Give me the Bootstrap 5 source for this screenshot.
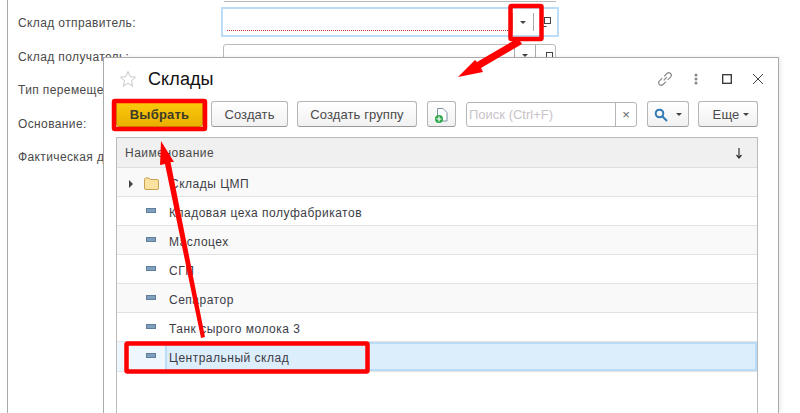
<!DOCTYPE html>
<html lang="ru">
<head>
    <meta charset="UTF-8">
    <meta name="viewport" content="width=device-width, initial-scale=1.0">
    <title>Склады</title>
    <link href="https://cdn.jsdelivr.net/npm/bootstrap@5.3.0/dist/css/bootstrap.min.css" rel="stylesheet">
    <style>
        html, body { height: 100%; }
        body {
            position: relative;
            overflow: hidden;
            background: #fff;
            color: #4a4a4a;
            font-family: "Liberation Sans", Arial, sans-serif;
            font-size: 12px;
            line-height: 16px;
            letter-spacing: .38px;
        }
        /* форма за окном */
        .form-back {
            height: 413px;
            margin-left: 7px;
            padding-left: 10px;
            border-left: 1px solid #aaa;
        }
        .form-line { height: 34px; padding-top: 4px; }
        .form-line-last { margin-top: -1px; }
        .form-line-first { height: 37px; }
        .form-line-second { height: 34px; }
        .form-label-1c { width: 203px; flex: none; }
        .label-first { padding-top: 8px; }
        .label-second { padding-top: 5px; }
        .field-1c {
            width: 333px;
            height: 30px;
            margin-left: 2px;
            border: 1px solid #bbb;
            border-radius: 3px;
            background: #fff;
        }
        .field-top {
            width: 332px;
            height: 2px;
            margin: 0 0 5px 206px;
            border-bottom: 1px solid #bbb;
        }
        .field-active {
            width: 338px;
            margin-left: 0;
            border: 2px solid #bbddf7;
            border-radius: 0;
            padding: 0 4px;
        }
        .field-fill {
            flex: 1;
            margin-bottom: 4px;
            border-bottom: 1px dotted #c03030;
        }
        .field-btn {
            width: 21px;
            border-left: 1px solid #aaa;
        }
        .field-open { width: 20px; padding-left: 6px; }
        .field-btn-low { padding-top: 9px; }
        .field-open-low { padding-top: 7px; }
        .tri-down {
            width: 0;
            height: 0;
            border: 3px solid transparent;
            border-top: 3px solid #444;
            border-bottom: 0;
        }
        /* окно выбора */
        .win-1c {
            position: absolute;
            left: 103px;
            top: 57px;
            width: 676px;
            height: 356px;
            padding: 0 20px 0 12px;
            background: #fff;
            border: 1px solid #aaa;
            border-bottom: 0;
            box-shadow: 2px 0 4px rgba(0, 0, 0, .08);
        }
        .win-head { height: 43px; padding-left: 3px; padding-bottom: 2px; }
        .win-title {
            margin-left: 11px;
            color: #111;
            font-size: 18px;
            letter-spacing: .1px;
        }
        .win-tools { margin-right: -15px; }
        .tool-cell { width: 31px; }
        .tools-1c { gap: 8px; height: 26px; margin-bottom: 10px; }
        .btn-1c {
            height: 26px;
            padding: 1px 0 0;
            border: 1px solid #b5b5b5;
            border-radius: 3px;
            border-bottom-color: #999;
            background: linear-gradient(#fff, #f1f1f1);
            color: #4a4a4a;
            font-size: 13px;
            letter-spacing: .1px;
            flex: none;
        }
        .btn-choose {
            width: 87px;
            border: 1px solid #c99a00;
            background: linear-gradient(#fccb0c, #e9b000);
            color: #3e3a28;
            font-weight: 700;
            letter-spacing: .2px;
        }
        .btn-w1 { width: 77px; }
        .btn-w2 { width: 120px; margin-left: 1px; }
        .btn-w3 { width: 29px; margin-left: 2px; }
        .btn-w4 { width: 42px; margin-left: 2px; }
        .btn-w5 { width: 60px; margin-left: 1px; padding-left: 6px; }
        .search-1c {
            width: 171px;
            height: 25px;
            margin-top: 1px;
            margin-left: 2px;
            border: 1px solid #b5b5b5;
            border-radius: 3px;
            color: #c9c3c9;
            font-size: 13px;
            letter-spacing: 0;
        }
        .search-1c span:first-child { flex: 1; padding-left: 2px; }
        .search-x {
            width: 21px;
            color: #666;
            text-align: center;
            border-left: 1px solid #b5b5b5;
            line-height: 23px;
        }
        .list-1c {
            height: 276px;
            border: 1px solid #bbb;
            border-bottom: 0;
            color: #3c3c46;
            letter-spacing: .5px;
        }
        .list-head {
            height: 30px;
            padding: 0 14px 0 8px;
            background: #f0f0f0;
            border-bottom: 1px solid #ddd;
            color: #4a4a4a;
        }
        .row-1c {
            height: 29px;
            padding-top: 3px;
            border-bottom: 1px solid #e2e2e2;
        }
        .row-alt { background: #f9f9f9; }
        .row-pick {
            height: 29px;
            border-top: 1px solid #e2e2e2;
            border-bottom: 1px solid #e2e2e2;
            margin-top: -1px;
            background: #eff7fe;
            box-sizing: content-box;
        }
        .cell-icon { width: 52px; flex: none; padding-left: 29px; }
        .cell-icon-pick { width: 48px; }
        .cell-folder { width: 53px; flex: none; padding-left: 12px; gap: 11px; }
        .cell-pick {
            flex: 1;
            height: 100%;
            padding: 2px 0 0 2px;
            background: #dcedfc;
            border: 2px solid #bbdcf7;
        }
        .dash-1c {
            width: 10px;
            height: 5px;
            margin-bottom: 5px;
            background: #7f9fbc;
            border: 1px solid #5f7f9c;
        }
        .dash-pick { margin-bottom: 2px; }
        .tri-right {
            width: 0;
            height: 0;
            border: 4px solid transparent;
            border-left: 4px solid #444;
            border-right: 0;
        }
        .marks-1c {
            position: absolute;
            left: 0;
            top: 0;
            pointer-events: none;
        }
    </style>
</head>
<body>
    <div class="form-back">
        <div class="field-top"></div>
        <div class="form-line-first d-flex">
            <div class="form-label-1c label-first">Склад отправитель:</div>
            <div class="field-1c field-active d-flex">
                <div class="field-fill"></div>
                <div class="field-btn d-flex align-items-center justify-content-center my-1"><span class="tri-down"></span></div>
                <div class="field-open field-btn d-flex align-items-center justify-content-center my-1">
                    <svg width="9" height="10" viewBox="0 0 9 10" fill="none" stroke="#444"><rect x="2.500" y=".5" width="6" height="6"/><path d="M4.500 9.500H.5V6"/></svg>
                </div>
            </div>
        </div>
        <div class="d-flex form-line-second">
            <div class="form-label-1c label-second">Склад получатель:</div>
            <div class="field-1c d-flex justify-content-end">
                <div class="field-btn field-btn-low d-flex justify-content-center"><span class="tri-down"></span></div>
                <div class="field-open field-btn field-open-low d-flex justify-content-center">
                    <svg width="9" height="10" viewBox="0 0 9 10" fill="none" stroke="#444"><rect x="2.500" y=".5" width="6" height="6"/><path d="M4.500 9.500H.5V6"/></svg>
                </div>
            </div>
        </div>
        <div class="form-line">Тип перемещения:</div>
        <div class="form-line">Основание:</div>
        <div class="form-line form-line-last">Фактическая дата:</div>
    </div>

    <div class="win-1c d-flex flex-column">
        <div class="win-head d-flex align-items-center">
            <svg width="18" height="18" viewBox="0 0 18 18" fill="#fff" stroke="#c8c8c8"><path d="M9 1.500 11.200 6.700 16.500 7.200 12.500 10.800 13.700 16.200 9 13.300 4.300 16.200 5.500 10.800 1.500 7.200 6.800 6.700Z"/></svg>
            <span class="win-title">Склады</span>
            <div class="win-tools d-flex align-items-center ms-auto">
                <div class="tool-cell d-flex justify-content-center">
                    <svg width="16" height="16" viewBox="0 0 18 18" fill="none" stroke="#888" stroke-width="1.300"><path d="M7.500 10.500 11 7M6 8 2.800 11.200a2.500 2.500 0 0 0 4 4L10 12M8 6l3.200-3.200a2.500 2.500 0 0 1 4 4L12 10"/></svg>
                </div>
                <div class="tool-cell d-flex justify-content-center">
                    <svg width="4" height="12" viewBox="0 0 4 12" fill="#888"><circle cx="2" cy="2" r="1.500"/><circle cx="2" cy="6" r="1.500"/><circle cx="2" cy="10" r="1.500"/></svg>
                </div>
                <div class="tool-cell d-flex justify-content-center">
                    <svg width="10" height="10" viewBox="0 0 10 10" fill="none" stroke="#333" stroke-width="1.300"><rect x=".7" y=".7" width="8.600" height="8.600"/></svg>
                </div>
                <div class="tool-cell d-flex justify-content-center">
                    <svg width="12" height="12" viewBox="0 0 12 12" fill="none" stroke="#444"><path d="M1 1 11 11M11 1 1 11"/></svg>
                </div>
            </div>
        </div>

        <div class="tools-1c d-flex">
            <button class="btn-1c btn-choose">Выбрать</button>
            <button class="btn-1c btn-w1">Создать</button>
            <button class="btn-1c btn-w2">Создать группу</button>
            <button class="btn-1c btn-w3">
                <svg width="18" height="18" viewBox="0 0 18 18"><path d="M4.500 2.500H10L14 6.500V15H4.500Z" fill="#fff" stroke="#7d93a5"/><circle cx="6" cy="13" r="4" fill="#2fa84a"/><path d="M6 10.500v5M3.500 13h5" stroke="#fff" stroke-width="1.200"/></svg>
            </button>
            <div class="search-1c d-flex align-items-center">
                <span>Поиск (Ctrl+F)</span>
                <span class="search-x">×</span>
            </div>
            <button class="btn-1c btn-w4 d-flex align-items-center justify-content-center gap-2">
                <svg width="14" height="14" viewBox="0 0 14 14" fill="none" stroke="#2f79b5" stroke-width="2"><circle cx="5.500" cy="5.500" r="3.800"/><path d="M8.500 8.500 13 13"/></svg>
                <span class="tri-down"></span>
            </button>
            <button class="btn-1c btn-w5 d-flex align-items-center justify-content-center gap-1">Еще <span class="tri-down"></span></button>
        </div>

        <div class="list-1c">
            <div class="list-head d-flex align-items-center justify-content-between">
                <span>Наименование</span>
                <svg width="8" height="12" viewBox="0 0 8 12" fill="none" stroke="#333" stroke-width="1.200"><path d="M4 1V11M1.500 8 4 11 6.500 8"/></svg>
            </div>
            <div class="row-1c row-alt d-flex align-items-center">
                <div class="cell-folder d-flex align-items-center">
                    <span class="tri-right"></span>
                    <svg width="15" height="13" viewBox="0 0 15 13" fill="#fbe2a0" stroke="#c9a24e"><path d="M.5 2.500Q.5 1 2 1H5L6.500 2.500H13Q14.500 2.500 14.500 4V11Q14.500 12.500 13 12.500H2Q.5 12.500 .5 11Z"/></svg>
                </div>
                <span>Склады ЦМП</span>
            </div>
            <div class="row-1c d-flex align-items-center">
                <div class="cell-icon"><div class="dash-1c"></div></div>
                <span>Кладовая цеха полуфабрикатов</span>
            </div>
            <div class="row-1c row-alt d-flex align-items-center">
                <div class="cell-icon"><div class="dash-1c"></div></div>
                <span>Маслоцех</span>
            </div>
            <div class="row-1c d-flex align-items-center">
                <div class="cell-icon"><div class="dash-1c"></div></div>
                <span>СГП</span>
            </div>
            <div class="row-1c row-alt d-flex align-items-center">
                <div class="cell-icon"><div class="dash-1c"></div></div>
                <span>Сепаратор</span>
            </div>
            <div class="row-1c d-flex align-items-center">
                <div class="cell-icon"><div class="dash-1c"></div></div>
                <span>Танк сырого молока 3</span>
            </div>
            <div class="row-pick d-flex align-items-center">
                <div class="cell-icon cell-icon-pick"><div class="dash-1c dash-pick"></div></div>
                <div class="cell-pick d-flex align-items-center">Центральный склад</div>
            </div>
        </div>
    </div>

    <!-- красные пометки поверх скриншота -->
    <svg class="marks-1c" width="800" height="413" viewBox="0 0 800 413" fill="none">
        <g stroke="#f00" stroke-width="4.500">
            <rect x="510.500" y="6" width="31" height="33" rx="1"/>
            <rect x="114" y="101" width="91" height="28" rx="1"/>
            <rect x="126.500" y="343.500" width="241" height="28" rx="1"/>
        </g>
        <g fill="#f00">
            <path d="M518 38 522 44 481 68 483 72 458 77 475 60 477 62Z"/>
            <path d="M161 141 174 162 170.500 162 205 337 201 338 165 164 160 165Z"/>
        </g>
    </svg>

    <script src="https://cdn.jsdelivr.net/npm/bootstrap@5.3.0/dist/js/bootstrap.bundle.min.js"></script>
</body>
</html>
